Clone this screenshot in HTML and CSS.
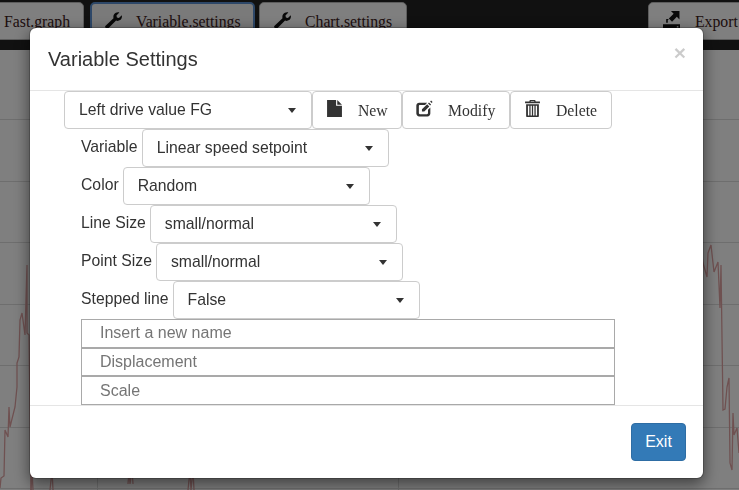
FILE: index.html
```html
<!DOCTYPE html>
<html lang="en">
<head>
    <meta charset="UTF-8">
    <meta name="viewport" content="width=device-width, initial-scale=1.0">
    <title>Variable Settings</title>
    <link rel="stylesheet" href="styles.css">
</head>
<body>
    <svg width="0" height="0" class="icon-defs">
        <symbol id="i-wrench" viewBox="0 0 16 16"><path d="M.3 13.200 8 5.800C7.500 3.800 8.300 1.800 10.200.8c1-.6 2.200-.7 3.300-.4L10.800 3.200l.4 1.900 1.900.5L15.800 3c.4 1.700-.1 3.500-1.600 4.600-1.100.8-2.500 1-3.800.5l-7.200 7.300c-1.200 1-3.800-.8-2.900-2.200Z"/></symbol>
        <symbol id="i-file" viewBox="0 0 16 16"><path d="M1 0h8.500v5.500H15V16H1ZM10.600 0 15 4.400h-4.400Z"/></symbol>
        <symbol id="i-edit" viewBox="0 0 16 16"><path d="M3 2.500h7.500L8.500 4.700H3.700c-.6 0-1 .4-1 1v6.600c0 .6.400 1 1 1h6.600c.6 0 1-.4 1-1V9.200l2.200-2.200v5.800c0 1.500-1.100 2.700-2.700 2.700H3c-1.500 0-2.700-1.200-2.700-2.700V5.200C.3 3.700 1.500 2.500 3 2.500Z"/><path d="M5.600 10.800V8.600L10.500 4l2 2-4.700 4.800ZM11.300 3.200l.9-.9 2 2-.9.900ZM14.200.5l1.400 1.400-.9.900-1.400-1.400Z"/></symbol>
        <symbol id="i-trash" viewBox="0 0 16 16"><path d="M5.500 0h5l.5 1.500h4V3H1V1.500h4ZM6.500.9l-.3.6h3.600l-.3-.6ZM2 4h12v11c0 .6-.4 1-1 1H3c-.6 0-1-.4-1-1Zm1.700 1.300v9.400h1.300V5.300Zm2.500 0v9.400h1.200V5.300Zm2.400 0v9.400h1.200V5.300Zm2.400 0v9.400h1.300V5.300Z"/></symbol>
        <symbol id="i-export" viewBox="0 0 16 16"><path d="M0 12.500h16V17H0Zm13 1.800h1.500v1.200H13ZM7.500 0H15.500v8L13 5.500 8.500 10 5.500 7 10 2.500ZM3 7.500h2.500l-1 1.200V11H3Z" fill-rule="evenodd"/></symbol>
    </svg>

    <nav class="topbar">
        <button class="tab tab-first">Fast.graph</button>
        <button class="tab tab-active"><svg class="tab-icon"><use href="#i-wrench"/></svg>Variable.settings</button>
        <button class="tab"><svg class="tab-icon"><use href="#i-wrench"/></svg>Chart.settings</button>
        <button class="tab tab-export"><svg class="tab-icon"><use href="#i-export"/></svg>Export</button>
    </nav>

    <svg class="chart" viewBox="0 50 739 440">
        <g class="grid">
            <line x1="0" x2="739" y1="119.500" y2="119.500"/>
            <line x1="0" x2="739" y1="181.500" y2="181.500"/>
            <line x1="0" x2="739" y1="242.500" y2="242.500"/>
            <line x1="0" x2="739" y1="304.500" y2="304.500"/>
            <line x1="0" x2="739" y1="365.500" y2="365.500"/>
            <line x1="0" x2="739" y1="427.500" y2="427.500"/>
            <line x1="0" x2="739" y1="488.500" y2="488.500"/>
            <line x1="97.500" x2="97.500" y1="478" y2="490"/>
            <line x1="398.500" x2="398.500" y1="478" y2="490"/>
        </g>
        <g class="trace">
            <polyline points="0,488 1,478 4,476 5,430 8,437 9,407 10,427 15,407 17,387 17,363 19,357 20,320 22,313 25,335 27,265 27,333 29,335 31,490"/>
            <polyline points="31,490 32,470 33,490"/>
            <polyline points="50,490 52,470 53,490"/>
            <polyline points="128,484 129,470 130,484 132,470 133,484"/>
            <polyline points="188,490 190,470 191,490 193,470 194,490"/>
            <polyline points="700,240 703,263 707,277 708,253 711,245 714,272 718,262 720,308 721,265 723,410 725,409 727,387 729,378 730,463 732,470 733,413 734,435 737,428 739,453"/>
        </g>
    </svg>

    <div class="backdrop">
        <div class="modal">
            <header class="modal-header">
                <h4 class="modal-title">Variable Settings</h4>
                <span class="modal-close">&times;</span>
            </header>
            <div class="modal-body">
                <div class="action-row">
                    <button class="select select-main"><span>Left drive value FG</span><i class="caret"></i></button>
                    <button class="action action-new"><svg class="action-icon"><use href="#i-file"/></svg><span>New</span></button>
                    <button class="action action-modify"><svg class="action-icon"><use href="#i-edit"/></svg><span>Modify</span></button>
                    <button class="action action-delete"><svg class="action-icon"><use href="#i-trash"/></svg><span>Delete</span></button>
                </div>
                <div class="field-row">
                    <label>Variable</label>
                    <button class="select"><span>Linear speed setpoint</span><i class="caret"></i></button>
                </div>
                <div class="field-row">
                    <label>Color</label>
                    <button class="select"><span>Random</span><i class="caret"></i></button>
                </div>
                <div class="field-row">
                    <label>Line Size</label>
                    <button class="select"><span>small/normal</span><i class="caret"></i></button>
                </div>
                <div class="field-row">
                    <label>Point Size</label>
                    <button class="select"><span>small/normal</span><i class="caret"></i></button>
                </div>
                <div class="field-row">
                    <label>Stepped line</label>
                    <button class="select"><span>False</span><i class="caret"></i></button>
                </div>
                <div class="inputs">
                    <input type="text" placeholder="Insert a new name">
                    <input type="text" placeholder="Displacement">
                    <input type="text" placeholder="Scale">
                </div>
            </div>
            <footer class="modal-footer">
                <button class="btn-exit">Exit</button>
            </footer>
        </div>
    </div>
</body>
</html>
```

FILE: styles.css
```css
* {
    box-sizing: border-box;
}
body {
    margin: 0;
    height: 100vh;
    overflow: hidden;
    background: white;
    font-family: 'Liberation Sans', Arial, sans-serif;
    font-size: 15.75px;
    color: #333;
}
.icon-defs {
    display: block;
    height: 0;
}

/* top bar */
.topbar {
    display: flex;
    height: 50px;
    padding-top: 2px;
    background: #222;
    overflow: hidden;
}
.tab {
    display: flex;
    align-items: center;
    height: 38px;
    margin-right: 4px;
    padding: 2px 14px 0;
    background: #fff;
    border: 1px solid #bbb;
    border-radius: 5px;
    font-family: 'Liberation Serif', serif;
    font-size: 15.75px;
    color: #3c2020;
}
.tab-first {
    margin-left: -12px;
    margin-right: 6px;
    padding-left: 15px;
    width: 96px;
}
.tab-active {
    width: 165px;
    padding-left: 13px;
    border: 2px solid #5b8fd0;
    background: #f4f4f4;
}
.tab-export {
    margin: 0 -19px 0 auto;
    flex: 0 0 110px;
}
.tab-icon {
    flex: none;
    width: 17px;
    height: 17px;
    margin: -4px 14px 0 0;
    fill: #111;
}
.tab-export .tab-icon {
    margin-top: -6px;
    margin-right: 15px;
}

/* chart behind the dialog */
.chart {
    display: block;
    width: 739px;
    height: 440px;
}
.grid line {
    stroke: #ddd;
    stroke-width: 1;
}
.trace polyline {
    fill: none;
    stroke: #dfa3a3;
    stroke-width: 1.3;
}

/* dialog */
.backdrop {
    position: fixed;
    top: 0;
    left: 0;
    right: 0;
    bottom: 0;
    background: rgba(0, 0, 0, 0.5);
    padding: 27px 35px 0 29px;
}
.modal {
    display: flex;
    flex-direction: column;
    height: 452px;
    background: #fff;
    border: 1px solid rgba(0, 0, 0, 0.2);
    background-clip: padding-box;
    border-radius: 7px;
    box-shadow: 0 5px 15px rgba(0, 0, 0, 0.5);
}
.modal-header {
    display: flex;
    justify-content: space-between;
    align-items: flex-start;
    height: 63px;
    padding: 20px 17px 0 18px;
    border-bottom: 1px solid #e5e5e5;
}
.modal-title {
    margin: 0;
    font-size: 20px;
    font-weight: 400;
    line-height: 23px;
}
.modal-close {
    font-size: 21px;
    font-weight: 700;
    line-height: 10px;
    color: #000;
    opacity: 0.2;
}
.modal-body {
    height: 314px;
    padding: 0 0 0 34px;
}
.action-row {
    display: flex;
    height: 38px;
}
.field-row {
    display: flex;
    align-items: flex-start;
    gap: 4px;
    height: 38px;
    padding-left: 17px;
}
.field-row label {
    line-height: 35px;
}
.select {
    display: flex;
    justify-content: space-between;
    align-items: center;
    width: 247px;
    height: 38px;
    padding: 0 15px 0 14px;
    background: #fff;
    border: 1px solid #ccc;
    border-radius: 4px;
    font-family: inherit;
    font-size: 15.75px;
    color: #333;
}
.select-main {
    width: 248px;
}
.caret {
    width: 0;
    height: 0;
    border-top: 5px solid #333;
    border-left: 4px solid transparent;
    border-right: 4px solid transparent;
}
.action {
    display: flex;
    align-items: center;
    height: 38px;
    padding: 0 13px;
    background: #fff;
    border: 1px solid #ccc;
    border-radius: 4px;
    font-family: 'Liberation Serif', serif;
    font-size: 15.75px;
    color: #333;
}
.action span {
    padding-top: 2px;
}
.action-new {
    width: 90px;
}
.action-modify {
    width: 108px;
}
.action-delete {
    width: 102px;
}
.action-icon {
    flex: none;
    width: 17px;
    height: 17px;
    margin: -3px 15px 0 0;
    fill: #333;
}
.inputs {
    display: flex;
    flex-direction: column;
    width: 534px;
    margin-left: 17px;
}
.inputs input {
    display: block;
    width: 100%;
    height: 28.67px;
    padding: 0 18px;
    border: 1px solid #a9a9a9;
    font-family: inherit;
    font-size: 16px;
    outline: none;
}
.inputs input::placeholder {
    color: #757575;
}
.modal-footer {
    display: flex;
    justify-content: flex-end;
    padding: 17px 17px 16px 0;
    border-top: 1px solid #e5e5e5;
}
.btn-exit {
    width: 55px;
    height: 38px;
    padding: 0;
    background: #337ab7;
    border: 1px solid #2e6da4;
    border-radius: 4px;
    font-family: inherit;
    font-size: 16px;
    color: #fff;
}
```
